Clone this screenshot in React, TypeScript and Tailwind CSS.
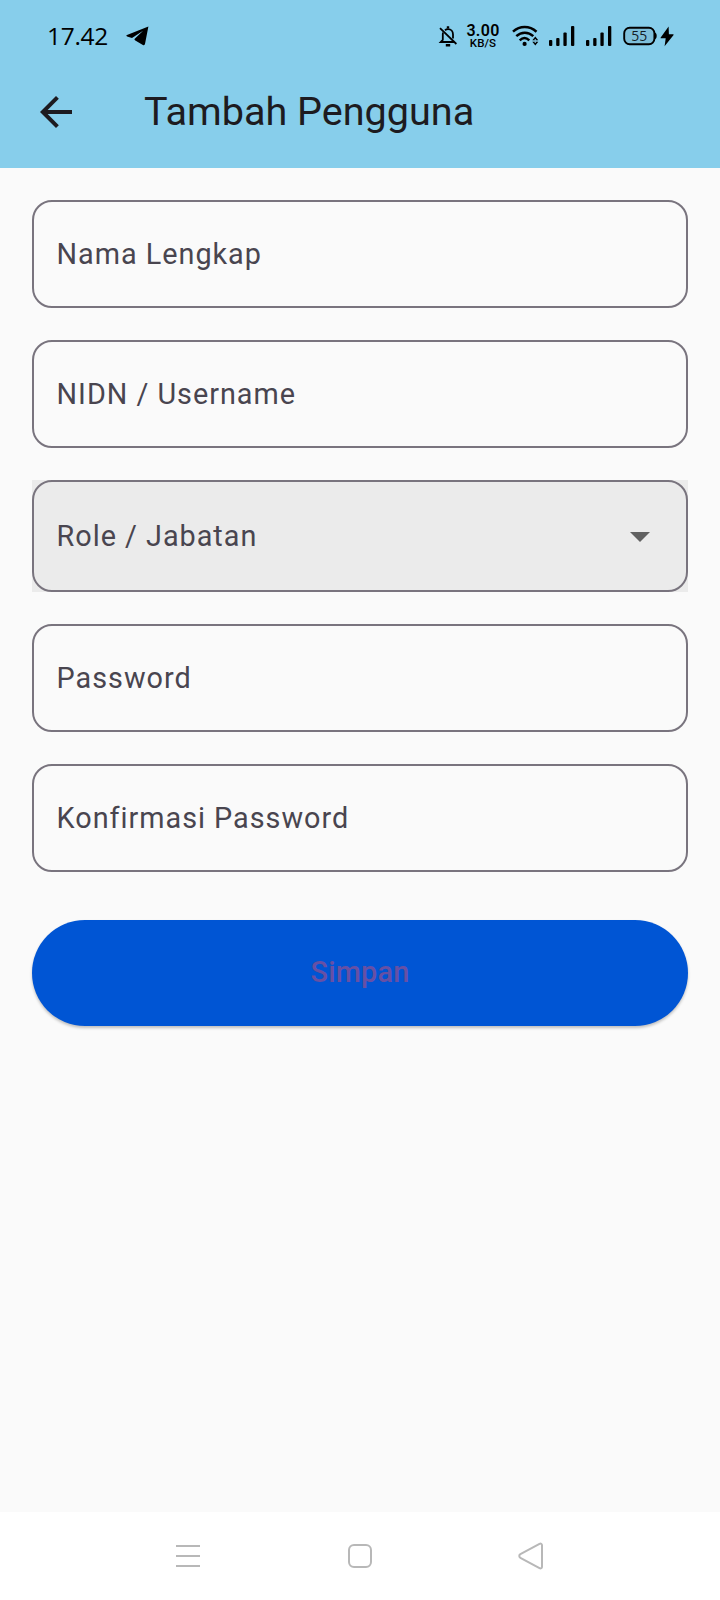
import React from "react";

function SignalBars() {
  return (
    <svg width="26" height="20" viewBox="0 0 26 20" fill="#000">
      <rect x="0" y="14" width="3.3" height="6" rx="1" />
      <rect x="7.2" y="12" width="3.3" height="8" rx="1" />
      <rect x="14.4" y="6.5" width="3.3" height="13.5" rx="1" />
      <rect x="22" y="0" width="3.3" height="20" rx="1" />
    </svg>
  );
}

function StatusBar() {
  return (
    <div className="flex h-[72px] items-center pl-[47px] text-black">
      <span className="w-[63px] font-['Open_Sans','Noto_Sans',sans-serif] text-[24.5px] leading-none tracking-[-0.3px]">
        17.42
      </span>
      <svg className="ml-4" width="23" height="20" viewBox="0 0 23 20">
        <path d="M22.4.6 1 9.1c-.9.4-.8 1.1.1 1.4l4.9 1.6L17.1 4.8 9 12.6c-.9.9-.5 1.5.3 2l7.6 4.3c1 .6 1.8.3 2.1-.8Z" fill="#000" />
      </svg>
      <svg className="ml-[289px]" width="20" height="22" viewBox="0 0 20 22" fill="none" stroke="#000" strokeWidth="1.8">
        <path d="M7 5.2C7.8 4.5 8.8 4.1 10 4.1c3 0 5 2.3 5 5.3v4" />
        <path d="M5.1 7.5C4.8 8.2 4.8 9 4.8 9.6v5.2L2.7 17H16" />
        <path d="M2 3.2 18.4 19" />
        <path d="M10 1.2v2.4M7.8 20.2h4.4" strokeWidth="2.4" />
      </svg>
      <div className="ml-[9px] flex w-8 flex-col items-center font-['Roboto',sans-serif]">
        <span className="text-[16px] font-semibold leading-[14px] tracking-[0.3px]">3.00</span>
        <span className="text-[11.5px] font-medium leading-[11px] tracking-[0.1px]">KB/S</span>
      </div>
      <svg className="ml-[13px]" width="28" height="22" viewBox="0 0 28 22" fill="none" stroke="#000" strokeWidth="2.5">
        <path d="M1 6.7C7.8.5 17.5.5 24.5 6.7" />
        <path d="M4.3 11.1c5-4.6 12-4.6 17 0" />
        <path d="M7.7 15.3c3-2.8 6.6-2.8 9.6 0" />
        <circle cx="12.6" cy="18.9" r="2.1" fill="#000" stroke="none" />
        <path d="M20.3 15.2 23.3 11.4 26.3 15.2ZM20.3 16.8 23.3 20.6 26.3 16.8Z" fill="#000" stroke="none" />
        <path d="M22.6 14.8h1.4M22.6 17.2h1.4" stroke="#87ceeb" strokeWidth="1.2" />
      </svg>
      <div className="ml-[9px] flex gap-[11px]">
        <SignalBars />
        <SignalBars />
      </div>
      <svg className="ml-[11px]" width="36" height="20" viewBox="0 0 36 20">
        <rect x="1.2" y="1.7" width="30.2" height="16.6" rx="5.5" fill="#7ebfda" stroke="#000" strokeWidth="1.9" />
        <path d="M31.8 6.6c1.4.7 1.9 1.8 1.9 3.4s-.5 2.7-1.9 3.4Z" fill="#000" />
        <text x="16.2" y="15" textAnchor="middle" fontFamily="Open Sans, sans-serif" fontSize="14" fill="#000" fillOpacity="0.85">55</text>
      </svg>
      <svg className="ml-px" width="14" height="21" viewBox="0 0 14 21">
        <path d="M8.6.5.7 11.4c-.3.5-.1.9.4.9h4.6L4.6 20.3l8.8-11.1c.4-.5.2-.9-.4-.9H8.9Z" fill="#000" />
      </svg>
    </div>
  );
}

function Field({ label, select = false }: { label: string; select?: boolean }) {
  const text = (
    <span className="text-[28.8px] leading-[34px] tracking-[0.98px] text-[#49454f]">{label}</span>
  );
  if (select) {
    return (
      <div className="h-28 bg-[#ebebeb]">
        <div className="flex h-full items-center justify-between rounded-[20px] border-2 border-[#79747e] pl-[22.6px] pr-9">
          {text}
          <svg className="mt-[2px]" width="20" height="10" viewBox="0 0 20 10">
            <path d="M0 0h20L10 10Z" fill="#616161" />
          </svg>
        </div>
      </div>
    );
  }
  return (
    <div className="flex h-[108px] items-center rounded-[20px] border-2 border-[#79747e] pl-[22.6px]">
      {text}
    </div>
  );
}

export default function App() {
  return (
    <div className="flex h-[1600px] w-[720px] flex-col bg-[#fafafa] font-['Roboto',sans-serif]">
      <header className="h-[168px] bg-[#87ceeb]">
        <StatusBar />
        <div className="flex h-20 items-center pl-10">
          <svg width="32" height="32" viewBox="4 4 16 16">
            <path d="M20 11H7.83l5.59-5.59L12 4l-8 8 8 8 1.41-1.41L7.83 13H20v-2z" fill="#1d1b20" />
          </svg>
          <h1 className="ml-[72px] text-[39.6px] leading-[48px] text-[#1d1b20]">Tambah Pengguna</h1>
        </div>
      </header>
      <main className="flex flex-1 flex-col gap-8 p-8">
        <Field label="Nama Lengkap" />
        <Field label="NIDN / Username" />
        <Field label="Role / Jabatan" select />
        <Field label="Password" />
        <Field label="Konfirmasi Password" />
        <button className="mt-4 h-[106px] rounded-full bg-[#0055d4] text-[28.8px] font-medium tracking-[0.2px] text-[#6750a4] shadow-[0_2px_3px_rgba(0,0,0,0.24)]">
          Simpan
        </button>
      </main>
      <nav className="flex h-[88px] items-center bg-white pl-[175px]">
        <svg width="26" height="26" viewBox="0 0 26 26" stroke="#b8b8b8" strokeWidth="2">
          <path d="M1 3h24M1 13h24M1 23h24" />
        </svg>
        <svg className="ml-[146px]" width="26" height="26" viewBox="0 0 26 26" fill="none" stroke="#b8b8b8" strokeWidth="2">
          <rect x="2" y="2" width="22" height="22" rx="5" />
        </svg>
        <svg className="ml-[144px]" width="28" height="28" viewBox="0 0 28 28" fill="none" stroke="#b8b8b8" strokeWidth="2">
          <path d="M3.4 12.2 22.5 1.9c1.3-.7 2.5 0 2.5 1.4v21.4c0 1.4-1.2 2.1-2.5 1.4L3.4 15.8c-1.5-.8-1.5-2.8 0-3.6Z" />
        </svg>
      </nav>
    </div>
  );
}
